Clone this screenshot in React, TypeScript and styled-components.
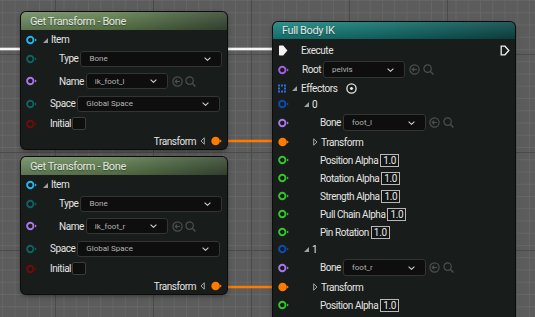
import React from "react";
import styled, { createGlobalStyle } from "styled-components";

const GlobalStyle = createGlobalStyle`
  html, body {
    margin: 0;
    padding: 0;
    background: #5c5c5c;
  }
  body {
    font-family: Roboto, "Liberation Sans", sans-serif;
  }
`;

const COLORS = {
  cyan: "#22b6ec",
  teal: "#0c6461",
  purple: "#a877ec",
  red: "#730b0b",
  orange: "#ff7a00",
  blue: "#0d4cb4",
  green: "#31c62b",
  rootPurple: "#a45fe2",
};

const Canvas = styled.div`
  position: relative;
  width: 535px;
  height: 317px;
  overflow: hidden;
  background-color: #5c5c5c;
  background-image: linear-gradient(to right, #4b4b4b 1px, transparent 1px),
    linear-gradient(to bottom, #4b4b4b 1px, transparent 1px),
    linear-gradient(to right, #666666 1px, transparent 1px),
    linear-gradient(to bottom, #666666 1px, transparent 1px);
  background-size: 98px 98px, 98px 98px, 12.25px 12.25px, 12.25px 12.25px;
  background-position: 55px 0, 0 54px, 2.25px 0, 0 0;
`;

const WireLayer = styled.svg`
  position: absolute;
  left: 0;
  top: 0;
  z-index: 0;
`;

const Node = styled.div<{ $x: number; $y: number; $w: number }>`
  position: absolute;
  left: ${(p) => p.$x}px;
  top: ${(p) => p.$y}px;
  width: ${(p) => p.$w}px;
  z-index: 1;
  border-radius: 5px;
  background: #181c1a;
  box-shadow: 0 0 0 1px #0b0c0b, 0 2px 5px rgba(0, 0, 0, 0.45);
`;

const Header = styled.div<{ $tone: "green" | "teal"; $h: number }>`
  display: flex;
  align-items: center;
  height: ${(p) => p.$h}px;
  padding-left: 9px;
  border-radius: 5px 5px 0 0;
  font-size: 11px;
  letter-spacing: -0.4px;
  color: #e2e8e0;
  text-shadow: 0 1px 1px rgba(0, 0, 0, 0.4);
  background: ${(p) =>
    p.$tone === "green"
      ? "linear-gradient(180deg, rgba(255,255,255,0.10), rgba(0,0,0,0.18)), linear-gradient(90deg, #6f8e62 0%, #62804f 45%, #445a3c 85%, #3b4c35 100%)"
      : "linear-gradient(180deg, rgba(255,255,255,0.10), rgba(0,0,0,0.18)), linear-gradient(90deg, #198480 0%, #127370 40%, #0e5a59 75%, #0c4848 100%)"};
`;

const Body = styled.div<{ $pt?: number }>`
  display: flex;
  flex-direction: column;
  padding-top: ${(p) => p.$pt ?? 0}px;
  padding-bottom: 1px;
`;

const Row = styled.div<{ $h: number; $end?: boolean }>`
  display: flex;
  align-items: center;
  height: ${(p) => p.$h}px;
  padding: 0 5px;
  justify-content: ${(p) => (p.$end ? "flex-end" : "flex-start")};
`;

const Label = styled.span<{ $indent?: number }>`
  margin-left: ${(p) => p.$indent ?? 0}px;
  font-size: 10px;
  letter-spacing: -0.45px;
  color: #e4e4e4;
  white-space: nowrap;
`;

const Spacer = styled.div`
  flex: 1;
`;

const Dropdown = styled.div<{ $w: number; $h: number }>`
  display: flex;
  align-items: center;
  justify-content: space-between;
  box-sizing: border-box;
  width: ${(p) => p.$w}px;
  height: ${(p) => p.$h}px;
  margin-left: 2px;
  padding: 0 10px 0 8px;
  background: #0e0e0e;
  border: 1px solid #343434;
  border-radius: 3px;
  font-size: 8px;
  color: #b4b4b4;
  white-space: nowrap;
`;

const ValueBox = styled.div`
  display: flex;
  align-items: center;
  justify-content: center;
  box-sizing: border-box;
  width: 19px;
  height: 13px;
  margin-left: 2px;
  border: 1px solid #b8b8b8;
  background: #121514;
  font-size: 10px;
  letter-spacing: -0.3px;
  color: #e6e6e6;
`;

const Checkbox = styled.div`
  box-sizing: border-box;
  width: 14px;
  height: 13px;
  margin-left: 1px;
  background: #0e0e0e;
  border: 1px solid #3c3c3c;
  border-radius: 2px;
`;

const Icon = styled.svg<{ $ml?: number }>`
  display: block;
  flex-shrink: 0;
  margin-left: ${(p) => p.$ml ?? 0}px;
`;

const Pin = ({ color, filled, ml }: { color: string; filled?: boolean; ml?: number }) => (
  <Icon $ml={ml} width="11" height="10" viewBox="0 0 11 10">
    {filled ? (
      <circle cx="4.6" cy="5" r="4.3" fill={color} />
    ) : (
      <circle cx="4.3" cy="5" r="3.2" fill="none" stroke={color} strokeWidth="1.9" />
    )}
    <path d="M9 3.4 L10.8 5 L9 6.6 Z" fill={color} />
  </Icon>
);

const ExecPin = ({ filled }: { filled?: boolean }) => (
  <Icon width="10" height="11" viewBox="0 0 10 11">
    {filled ? (
      <path d="M1 1.2 Q1 0.6 1.6 0.6 H5.2 L9.4 5.5 L5.2 10.4 H1.6 Q1 10.4 1 9.8 Z" fill="#f4f4f4" />
    ) : (
      <path d="M1.2 1.2 H5 L8.8 5.5 L5 9.8 H1.2 Z" fill="none" stroke="#efefef" strokeWidth="1.3" />
    )}
  </Icon>
);

const Expander = ({ ml }: { ml?: number }) => (
  <Icon $ml={ml} width="5" height="6" viewBox="0 0 5 6">
    <path d="M5 1 V6 H0 Z" fill="#a0a0a0" />
  </Icon>
);

const Collapsed = ({ ml }: { ml?: number }) => (
  <Icon $ml={ml} width="5" height="8" viewBox="0 0 5 8">
    <path d="M0.7 0.8 L4 4 L0.7 7.2 Z" fill="none" stroke="#a6a6a6" strokeWidth="1" />
  </Icon>
);

const OutArrow = ({ ml }: { ml?: number }) => (
  <Icon $ml={ml} width="5" height="8" viewBox="0 0 5 8">
    <path d="M4.3 0.8 L1 4 L4.3 7.2 Z" fill="none" stroke="#a6a6a6" strokeWidth="1" />
  </Icon>
);

const Chevron = () => (
  <Icon width="7" height="4" viewBox="0 0 7 4">
    <path d="M0.6 0.6 L3.5 3.3 L6.4 0.6" fill="none" stroke="#d2d2d2" strokeWidth="1.1" />
  </Icon>
);

const UseSelected = ({ ml }: { ml?: number }) => (
  <Icon $ml={ml} width="11" height="11" viewBox="0 0 11 11">
    <circle cx="5.5" cy="5.5" r="4.6" fill="none" stroke="#4e4e4e" strokeWidth="1.2" />
    <path d="M8 5.5 H3.4 M5.2 3.6 L3.3 5.5 L5.2 7.4" fill="none" stroke="#4e4e4e" strokeWidth="1.2" />
  </Icon>
);

const Browse = ({ ml }: { ml?: number }) => (
  <Icon $ml={ml} width="11" height="11" viewBox="0 0 11 11">
    <circle cx="4.6" cy="4.6" r="3.7" fill="none" stroke="#4e4e4e" strokeWidth="1.2" />
    <path d="M7.3 7.3 L10.4 10.4" stroke="#4e4e4e" strokeWidth="1.4" />
  </Icon>
);

const AddPin = ({ ml }: { ml?: number }) => (
  <Icon $ml={ml} width="11" height="11" viewBox="0 0 11 11">
    <circle cx="5.5" cy="5.5" r="4.6" fill="none" stroke="#e6e6e6" strokeWidth="1.3" />
    <path d="M5.5 3.9 V7.1 M3.9 5.5 H7.1" stroke="#e6e6e6" strokeWidth="1.5" />
  </Icon>
);

const ArrayIcon = () => (
  <Icon width="10" height="9" viewBox="0 0 10 9">
    {[0, 1, 2].flatMap((r) =>
      [0, 1, 2]
        .filter((c) => !(r === 1 && c === 1))
        .map((c) => <rect key={`${r}-${c}`} x={c * 3} y={r * 3 + 0.5} width="2" height="2" fill="#2a6fe0" />)
    )}
  </Icon>
);

const BoneNode = ({ top, name }: { top: number; name: string }) => (
  <Node $x={21} $y={top} $w={206}>
    <Header $tone="green" $h={18}>
      Get Transform - Bone
    </Header>
    <Body>
      <Row $h={19}>
        <Pin color={COLORS.cyan} />
        <Expander ml={6} />
        <Label $indent={3}>Item</Label>
      </Row>
      <Row $h={19}>
        <Pin color={COLORS.teal} />
        <Label $indent={22}>Type</Label>
        <Dropdown $w={143} $h={16}>
          Bone
          <Chevron />
        </Dropdown>
      </Row>
      <Row $h={26}>
        <Pin color={COLORS.purple} />
        <Label $indent={22}>Name</Label>
        <Dropdown $w={82} $h={16}>
          {name}
          <Chevron />
        </Dropdown>
        <UseSelected ml={4} />
        <Browse ml={2} />
      </Row>
      <Row $h={19}>
        <Pin color={COLORS.teal} />
        <Label $indent={13}>Space</Label>
        <Dropdown $w={143} $h={16}>
          Global Space
          <Chevron />
        </Dropdown>
      </Row>
      <Row $h={21}>
        <Pin color={COLORS.red} />
        <Label $indent={13}>Initial</Label>
        <Checkbox />
      </Row>
      <Row $h={14} $end>
        <Label>Transform</Label>
        <OutArrow ml={4} />
        <Pin color={COLORS.orange} filled ml={6} />
      </Row>
    </Body>
  </Node>
);

const AlphaRow = ({ label }: { label: string }) => (
  <Row $h={18}>
    <Pin color={COLORS.green} />
    <Label $indent={31}>{label}</Label>
    <ValueBox>1.0</ValueBox>
  </Row>
);

const Effector = ({ index, bone }: { index: string; bone: string }) => (
  <>
    <Row $h={16}>
      <Pin color={COLORS.blue} />
      <Expander ml={15} />
      <Label $indent={3}>{index}</Label>
    </Row>
    <Row $h={21}>
      <Pin color={COLORS.purple} />
      <Label $indent={31}>Bone</Label>
      <Dropdown $w={83} $h={17}>
        {bone}
        <Chevron />
      </Dropdown>
      <UseSelected ml={3} />
      <Browse ml={3} />
    </Row>
    <Row $h={18}>
      <Pin color={COLORS.orange} filled />
      <Collapsed ml={24} />
      <Label $indent={3}>Transform</Label>
    </Row>
  </>
);

const FullBodyIK = () => (
  <Node $x={273} $y={22} $w={242}>
    <Header $tone="teal" $h={17}>
      Full Body IK
    </Header>
    <Body $pt={2}>
      <Row $h={18}>
        <ExecPin filled />
        <Label $indent={13}>Execute</Label>
        <Spacer />
        <ExecPin />
      </Row>
      <Row $h={21}>
        <Pin color={COLORS.rootPurple} />
        <Label $indent={13}>Root</Label>
        <Dropdown $w={82} $h={17}>
          pelvis
          <Chevron />
        </Dropdown>
        <UseSelected ml={4} />
        <Browse ml={3} />
      </Row>
      <Row $h={16}>
        <ArrayIcon />
        <Expander ml={4} />
        <Label $indent={4}>Effectors</Label>
        <AddPin ml={9} />
      </Row>
      <Effector index="0" bone="foot_l" />
      <AlphaRow label="Position Alpha" />
      <AlphaRow label="Rotation Alpha" />
      <AlphaRow label="Strength Alpha" />
      <AlphaRow label="Pull Chain Alpha" />
      <AlphaRow label="Pin Rotation" />
      <Effector index="1" bone="foot_r" />
      <AlphaRow label="Position Alpha" />
      <AlphaRow label="Rotation Alpha" />
    </Body>
  </Node>
);

export default function App() {
  return (
    <>
      <GlobalStyle />
      <Canvas>
        <WireLayer width="535" height="317" viewBox="0 0 535 317">
          <line x1="0" y1="49" x2="280" y2="49" stroke="rgba(255,255,255,0.3)" strokeWidth="4" />
          <line x1="0" y1="49" x2="280" y2="49" stroke="#f4f4f4" strokeWidth="2.2" />
          <line x1="216" y1="141" x2="282" y2="141" stroke="#ff7a00" strokeWidth="2.6" />
          <line x1="216" y1="287" x2="282" y2="287" stroke="#ff7a00" strokeWidth="2.6" />
        </WireLayer>
        <BoneNode top={12} name="ik_foot_l" />
        <BoneNode top={157} name="ik_foot_r" />
        <FullBodyIK />
      </Canvas>
    </>
  );
}
